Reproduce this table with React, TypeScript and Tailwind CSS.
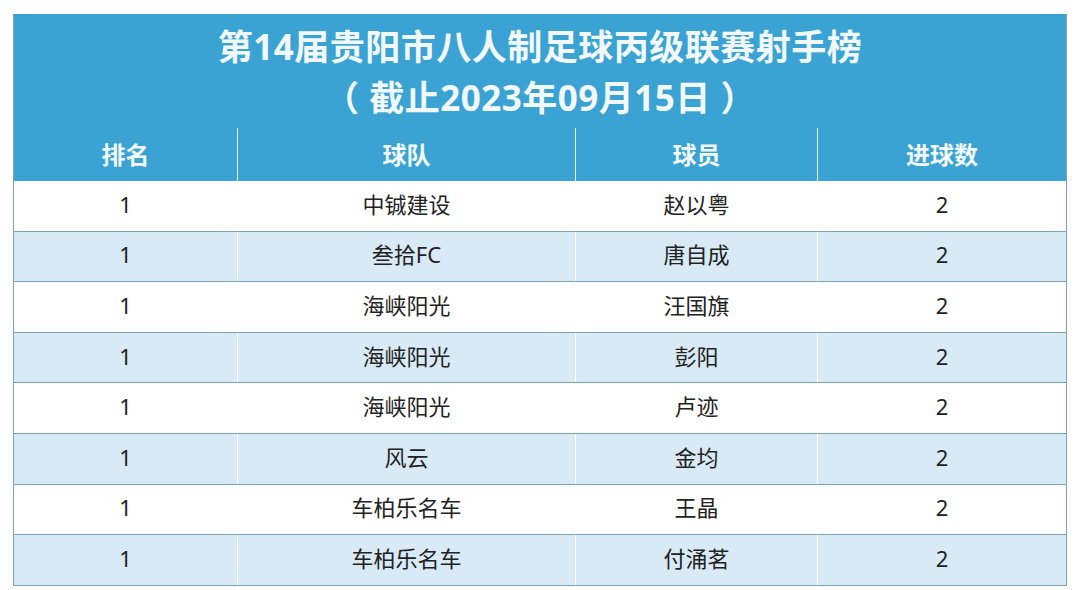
import React from "react";

const rows: [string, string, string, string][] = [
  ["1", "中铖建设", "赵以粤", "2"],
  ["1", "叁拾FC", "唐自成", "2"],
  ["1", "海峡阳光", "汪国旗", "2"],
  ["1", "海峡阳光", "彭阳", "2"],
  ["1", "海峡阳光", "卢迹", "2"],
  ["1", "风云", "金均", "2"],
  ["1", "车柏乐名车", "王晶", "2"],
  ["1", "车柏乐名车", "付涌茗", "2"],
];

const cols = ["w-[224px]", "w-[338px]", "w-[242px]", "flex-1"];

export default function App() {
  return (
    <div
      className="w-[1080px] h-[590px] overflow-hidden bg-white pt-[14px] pl-[13px]"
      style={{ fontFamily: '"Noto Sans", "Noto Sans CJK SC", sans-serif' }}
    >
      <div className="w-[1054px] border-x border-[#7fa3b5]">
        <div className="bg-[#3ba3d3] text-[#f2f9fd]">
          <div className="h-[114px] flex flex-col items-center pt-[11px]">
            <div className="text-[35px] font-bold leading-[44px] tracking-[0.5px]">
              第14届贵阳市八人制足球丙级联赛射手榜
            </div>
            <div className="text-[35px] font-bold leading-[44px] mt-[7px] tracking-[0.5px]">
              （ 截止2023年09月15日 ）
            </div>
          </div>
          <div className="flex h-[53px]">
            {["排名", "球队", "球员", "进球数"].map((h, i) => (
              <div
                key={h}
                className={`${cols[i]} flex items-center justify-center text-[24px] font-bold ${
                  i < 3 ? "border-r border-[#e8f4fa]" : ""
                }`}
              >
                {h}
              </div>
            ))}
          </div>
        </div>
        {rows.map((r, ri) => (
          <div
            key={ri}
            className={`flex h-[50.6px] border-b border-[#7fa3b5] ${
              ri % 2 === 0 ? "bg-white" : "bg-[#d8eaf5]"
            }`}
          >
            {r.map((c, i) => (
              <div
                key={i}
                className={`${cols[i]} flex items-center justify-center pb-[3px] text-[22px] text-[#222] ${
                  i < 3 ? "border-r border-white" : ""
                }`}
              >
                {c}
              </div>
            ))}
          </div>
        ))}
      </div>
    </div>
  );
}
